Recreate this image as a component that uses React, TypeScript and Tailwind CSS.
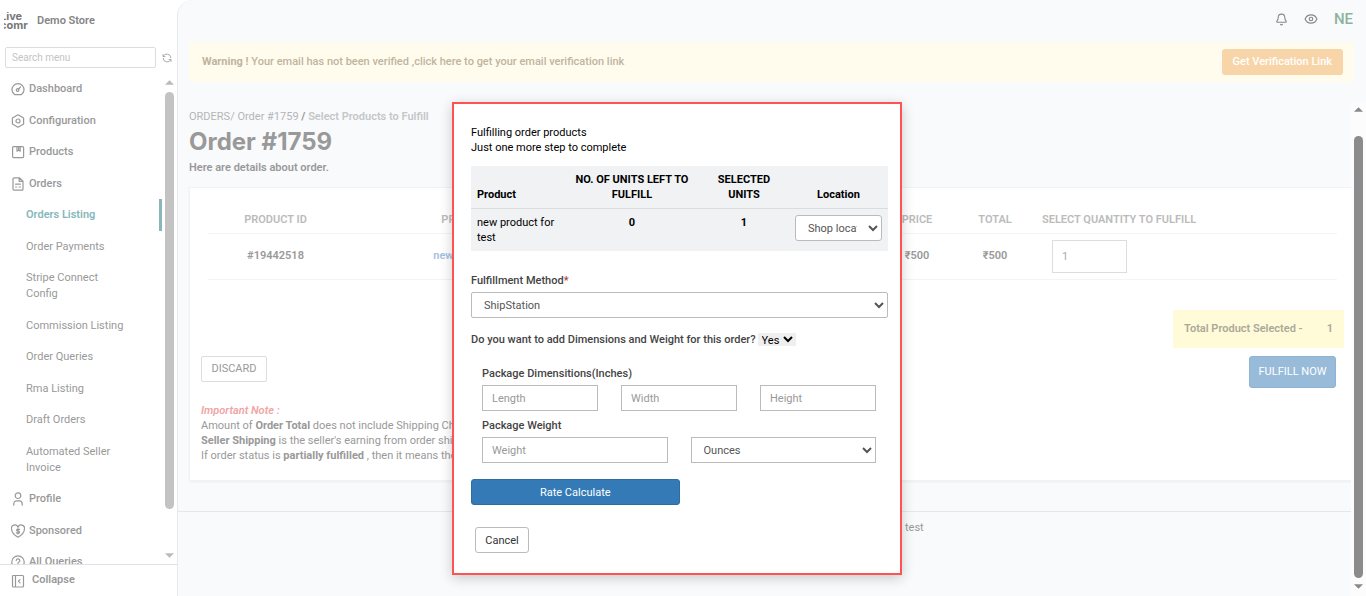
import { ReactNode, useState } from 'react'
import { Bell, Eye } from 'lucide-react'

interface IconProps {
  children: ReactNode
}

function Icon({ children }: IconProps) {
  return (
    <svg
      viewBox="0 0 14 14"
      className="size-[14px] shrink-0"
      fill="none"
      stroke="currentColor"
      strokeWidth="1.2"
      strokeLinecap="round"
      strokeLinejoin="round"
      aria-hidden="true"
    >
      {children}
    </svg>
  )
}

const icons = {
  dashboard: (
    <Icon>
      <path d="M3.6 12.6a6 6 0 1 1 6.8 0z" />
      <circle cx="6.6" cy="8" r="1.3" />
      <path d="M7.6 7l1.900-2" />
    </Icon>
  ),
  configuration: (
    <Icon>
      <path d="M7 .8l5.6 3.1v6.2L7 13.2l-5.6-3.100V3.900z" />
      <circle cx="7" cy="7" r="2" />
    </Icon>
  ),
  products: (
    <Icon>
      <rect x="1.600" y="1.600" width="11" height="11" rx="1" />
      <path d="M6 1.800v4.400l1.600-1.200 1.600 1.200V1.800M7.600 2v2.500" />
    </Icon>
  ),
  orders: (
    <Icon>
      <path d="M2 1.800a1 1 0 0 1 1-1h5.400L12 4.200v8a1 1 0 0 1-1 1H3a1 1 0 0 1-1-1zM8.200 1v3.400h3.600M4.600 7.200h2M6.400 7.200h3M4.600 10h1M8 10h1.400" />
    </Icon>
  ),
  profile: (
    <Icon>
      <circle cx="7" cy="3.700" r="2.800" />
      <path d="M2.800 13.200v-1.400a3 3 0 0 1 3-3h2.400a3 3 0 0 1 3 3v1.400" />
    </Icon>
  ),
  sponsored: (
    <Icon>
      <path d="M7 13.200C3 10.800.6 8.300.6 5.200A3.300 3.300 0 0 1 7 3.400a3.300 3.300 0 0 1 6.400 1.800c0 3.100-2.400 5.600-6.400 8z" />
      <path d="M8.600 5.700c-.4-.6-3-.9-3 .5 0 1.300 3 .7 3 2.100 0 1.300-2.700 1.200-3.200.4M7 4.600v5.400" />
    </Icon>
  ),
  queries: (
    <Icon>
      <circle cx="7" cy="7" r="6.200" />
      <path d="M5.200 5.600a1.800 1.800 0 1 1 2.500 1.700c-.5.200-.7.500-.7 1.100M7 10.300v.1" />
    </Icon>
  ),
}

interface MenuItem {
  label: ReactNode
  icon?: ReactNode
  active?: boolean
}

const menu: MenuItem[] = [
  { label: 'Dashboard', icon: icons.dashboard },
  { label: 'Configuration', icon: icons.configuration },
  { label: 'Products', icon: icons.products },
  { label: 'Orders', icon: icons.orders },
  { label: 'Orders Listing', active: true },
  { label: 'Order Payments' },
  { label: 'Stripe Connect Config' },
  { label: 'Commission Listing' },
  { label: 'Order Queries' },
  { label: 'Rma Listing' },
  { label: 'Draft Orders' },
  { label: 'Automated Seller Invoice' },
  { label: 'Profile', icon: icons.profile },
  { label: 'Sponsored', icon: icons.sponsored },
  { label: 'All Queries', icon: icons.queries },
]

function MenuLink({ item }: { item: MenuItem }) {
  if (item.icon) {
    return (
      <li>
        <a href="#" className="flex items-center gap-1 pl-[11px] text-[11px] leading-4 font-medium text-[#999]">
          {item.icon}
          <span>{item.label}</span>
        </a>
      </li>
    )
  }
  return (
    <li className="relative">
      <a
        href="#"
        className={
          item.active
            ? 'block pl-[26px] text-[11px] leading-4 font-semibold text-[#86b7bc]'
            : 'block w-[130px] pl-[26px] text-[11px] leading-4 text-[#999]'
        }
      >
        {item.label}
      </a>
      {item.active && <span className="absolute -top-2 right-0 h-8 w-[3px] bg-[#8ab5bb]" />}
    </li>
  )
}

function Arrow({ down }: { down?: boolean }) {
  return (
    <svg viewBox="0 0 10 5" className="h-[5px] w-[9px] shrink-0" fill="currentColor" aria-hidden="true">
      <path d={down ? 'M0 0h10L5 5z' : 'M0 5h10L5 0z'} />
    </svg>
  )
}

function Sidebar() {
  return (
    <aside className="flex h-full w-[177px] shrink-0 flex-col bg-white">
      <div className="flex h-[42px] items-center gap-[7px] pl-1">
        <div className="flex w-[26px] flex-col items-start overflow-hidden font-[Inter,sans-serif] text-[11px] leading-[9px] font-bold text-[#777]">
          <span className="-ml-1">Live</span>
          <span className="-ml-1">comr</span>
        </div>
        <span className="text-[11px] font-semibold text-[#858585]">Demo Store</span>
      </div>
      <div className="flex items-center gap-[6px] pt-[5px] pl-[5px]">
        <input
          type="text"
          aria-label="Search menu"
          placeholder="Search menu"
          className="h-[21px] w-[151px] rounded-xs border border-[#ddd] px-[6px] text-[10px] placeholder:text-[#c4c4c4]"
        />
        <button type="button" aria-label="Refresh menu" className="text-[#aaa]">
          <svg viewBox="0 0 10 10" className="size-[10px]" fill="none" stroke="currentColor" strokeWidth="1">
            <path d="M1 1.200V3.500h2.300M1.200 3.300A4 4 0 0 1 8.800 5M9 8.800V6.500H6.700M8.800 6.700A4 4 0 0 1 1.200 5" />
          </svg>
        </button>
      </div>
      <div className="flex min-h-0 flex-1 pt-3">
        <nav className="min-w-0 flex-1 overflow-hidden pt-px" aria-label="Main menu">
          <ul className="flex h-[489px] flex-col justify-between">
            {menu.map((item, i) => (
              <MenuLink key={i} item={item} />
            ))}
          </ul>
        </nav>
        <div className="flex w-[15px] flex-col items-center gap-[7px] pb-[6px] text-[#bbb]">
          <Arrow />
          <div className="w-[9px] flex-1 rounded-full bg-[#c3c3c3]" />
          <div className="h-[30px]" />
          <Arrow down />
        </div>
      </div>
      <button type="button" className="flex h-8 shrink-0 items-center gap-[7px] border-t border-[#dee2e6] pl-[11px] text-[11px] font-semibold text-[#999]">
        <Icon>
          <path d="M1.500 2.500a1 1 0 0 1 1-1h9a1 1 0 0 1 1 1v9.500a1 1 0 0 1-1 1h-9a1 1 0 0 1-1-1zM4.500 1.500v11.500M9 5.600L7.400 7.200 9 8.800" />
        </Icon>
        Collapse
      </button>
    </aside>
  )
}

function OrderPage() {
  return (
    <main className="min-w-0 flex-1 overflow-hidden rounded-tl-2xl border-l border-[#e6e9ed] bg-[#f9fafc]">
      <header className="flex h-[42px] items-center justify-end gap-4 pr-[13px] pb-1 text-[#888]">
        <button type="button" aria-label="Notifications">
          <Bell size={13} strokeWidth={2} />
        </button>
        <button type="button" aria-label="Preview store">
          <Eye size={14} strokeWidth={2} />
        </button>
        <button type="button" className="text-[15px] font-medium text-[#8cb39c]">
          NE
        </button>
      </header>

      <div className="mr-3 ml-[11px] flex h-10 items-center justify-between bg-[#fffcee] pr-[11px] pl-[13px] text-[11px] text-[#c1b49d]">
        <p className="font-medium">
          <b className="font-bold">Warning !</b> Your email has not been verified ,click here to get your email verification link
        </p>
        <button type="button" className="h-[26px] rounded-[3px] bg-[#f7d5a9] px-[11px] font-medium text-white">
          Get Verification Link
        </button>
      </div>

      <div className="mr-[14px] ml-[11px] pt-[26px] text-[#999]">
        <p className="text-[11px] leading-[18px] text-[#b5b5b5]">
          <a href="#">ORDERS/</a> <a href="#">Order #1759</a> <span className="font-bold text-[#999]">/</span>{' '}
          <span className="font-semibold text-[#c5c6c8]">Select Products to Fulfill</span>
        </p>
        <h1 className="font-[Inter,sans-serif] text-[24px] leading-8 font-bold text-[#999]">Order #1759</h1>
        <p className="pt-px text-[11px] leading-[18px] font-semibold text-[#999]">Here are details about order.</p>

        <section className="mt-[10px] h-[294px] border border-[#f0f2f4] bg-white text-[11px] leading-[18px] shadow-xs">
          <div className="pt-[23px] pr-[14px] pl-[18px]">
            <table className="w-full table-fixed text-center font-semibold">
              <colgroup>
                <col className="w-[135px]" />
                <col className="w-[280px]" />
                <col />
                <col className="w-[78px]" />
                <col className="w-[78px]" />
                <col className="w-[303px]" />
              </colgroup>
              <thead className="text-[#bbb]">
                <tr className="h-[22px] border-b border-[#f4f4f4] align-top">
                  <th className="font-semibold">PRODUCT ID</th>
                  <th className="font-semibold">PRODUCT NAME</th>
                  <th />
                  <th className="font-semibold">PRICE</th>
                  <th className="font-semibold">TOTAL</th>
                  <th className="pl-2 text-left font-semibold">SELECT QUANTITY TO FULFILL</th>
                </tr>
              </thead>
              <tbody>
                <tr className="h-[46px] border-b border-[#f4f4f4]">
                  <td>#19442518</td>
                  <td>
                    <a href="#" className="text-[#a3c3df]">
                      new product for test
                    </a>
                  </td>
                  <td />
                  <td>₹500</td>
                  <td>₹500</td>
                  <td className="pl-[18px] text-left">
                    <input
                      type="text"
                      aria-label="Quantity to fulfill"
                      defaultValue="1"
                      className="block h-[33px] w-[75px] border border-[#ddd] px-[9px] font-normal text-[#aaa]"
                    />
                  </td>
                </tr>
              </tbody>
            </table>
          </div>
          <div className="flex justify-end pt-[30px] pr-[7px]">
            <p className="flex h-[38px] w-[171px] items-center justify-between bg-[#fffad8] px-[11px] font-semibold text-[#aba998]">
              <span>Total Product Selected -</span>
              <span>1</span>
            </p>
          </div>
          <div className="flex items-start justify-between pt-2 pr-[15px] pl-[11px]">
            <button type="button" className="h-[26px] w-[66px] rounded-xs border border-[#ddd] text-[#999]">
              DISCARD
            </button>
            <button type="button" className="h-8 w-[87px] rounded-[3px] border border-[#8fb3d2] bg-[#99bbda] text-white">
              FULFILL NOW
            </button>
          </div>
          <div className="pt-[15px] pl-[11px] leading-[15px]">
            <p className="font-semibold text-[#f0a5a5] italic">Important Note :</p>
            <p>
              Amount of <b>Order Total</b> does not include Shipping Charges
            </p>
            <p>
              <b>Seller Shipping</b> is the seller's earning from order shipping
            </p>
            <p>
              If order status is <b>partially fulfilled</b> , then it means there
            </p>
          </div>
        </section>
      </div>

      <footer className="mt-[30px] mr-[15px] border-t border-[#e4e7ec] pt-[7px] pl-[727px] text-[11px] leading-[18px] text-[#999]">
        test
      </footer>
    </main>
  )
}

const fieldClass = 'h-[26px] min-w-0 border border-[#bbb] bg-white px-[9px] text-[11px] text-[#555] placeholder:text-[#999]'
const selectClass = 'border border-[#bbb] bg-white pl-2 pr-2 text-[11px] text-[#555]'

function FulfillDialog() {
  const [addDimensions, setAddDimensions] = useState('Yes')

  return (
    <div
      role="dialog"
      aria-label="Fulfilling order products"
      className="w-[450px] border-2 border-[#ff5252] bg-white pt-[21px] pr-3 pb-5 pl-[17px] text-[11px] leading-[15px] text-black shadow-[0_3px_12px_rgba(0,0,0,0.2)]"
    >
      <p>Fulfilling order products</p>
      <p>Just one more step to complete</p>

      <table className="mt-[11px] w-full table-fixed bg-[#f0f2f4]">
        <colgroup>
          <col className="w-[98px]" />
          <col className="w-[126px]" />
          <col className="w-[98px]" />
          <col />
        </colgroup>
        <thead>
          <tr className="border-b border-[#dadcde] align-bottom">
            <th className="py-[6px] pl-[6px] text-left font-bold">Product</th>
            <th className="py-[6px] font-bold">NO. OF UNITS LEFT TO FULFILL</th>
            <th className="px-4 py-[6px] font-bold">SELECTED UNITS</th>
            <th className="py-[6px] pr-1 font-bold">Location</th>
          </tr>
        </thead>
        <tbody>
          <tr className="align-top">
            <td className="py-[6px] pl-[6px]">new product for test</td>
            <td className="py-[6px] text-center font-bold">0</td>
            <td className="py-[6px] text-center font-bold">1</td>
            <td className="py-[6px] pl-[2px]">
              <select aria-label="Location" className={`${selectClass} h-[26px] w-[87px] rounded-[3px]`}>
                <option>Shop location</option>
              </select>
            </td>
          </tr>
        </tbody>
      </table>

      <label htmlFor="method" className="mt-[22px] block font-medium text-[#444]">
        Fulfillment Method<span className="text-[#a94442]">*</span>
      </label>
      <select id="method" className={`${selectClass} mt-1 block h-[26px] w-full rounded-xs`}>
        <option>ShipStation</option>
      </select>

      <div className="mt-[14px] flex items-center gap-[2px]">
        <label htmlFor="add-dimensions" className="font-medium text-[#444]">
          Do you want to add Dimensions and Weight for this order?
        </label>
        <select
          id="add-dimensions"
          value={addDimensions}
          onChange={(e) => setAddDimensions(e.target.value)}
          className="h-[13px] bg-[#efefef] text-[11px] leading-[13px]"
        >
          <option>Yes</option>
          <option>No</option>
        </select>
      </div>

      <div className="pt-[19px] pr-3 pl-[11px]">
        <p className="font-medium text-[#444]">Package Dimensitions(Inches)</p>
        <div className="mt-1 grid grid-cols-3 gap-[23px]">
          <input type="text" aria-label="Length" placeholder="Length" className={fieldClass} />
          <input type="text" aria-label="Width" placeholder="Width" className={fieldClass} />
          <input type="text" aria-label="Height" placeholder="Height" className={fieldClass} />
        </div>
        <label htmlFor="weight" className="mt-[7px] block font-medium text-[#444]">
          Package Weight
        </label>
        <div className="mt-1 grid grid-cols-2 gap-[23px]">
          <input id="weight" type="text" placeholder="Weight" className={fieldClass} />
          <select aria-label="Weight unit" className={`${selectClass} h-[26px]`}>
            <option>Ounces</option>
          </select>
        </div>
      </div>

      <button type="button" className="mt-4 block h-[26px] w-1/2 rounded-[3px] border border-[#2e6da4] bg-[#337ab7] text-white">
        Rate Calculate
      </button>
      <button type="button" className="mt-[22px] ml-1 block h-[26px] w-[54px] rounded-[3px] border border-[#bbb] bg-white text-[#333]">
        Cancel
      </button>
    </div>
  )
}

export default function App() {
  return (
    <div className="relative flex h-screen overflow-hidden bg-white font-[Roboto,sans-serif]">
      <Sidebar />
      <OrderPage />
      <div className="absolute inset-0 flex pt-[102px]">
        <div className="flex flex-1 items-start justify-center pl-[3px]">
          <FulfillDialog />
        </div>
        <div className="flex w-[15px] flex-col items-center gap-[6px] bg-[#fcfcfc] pt-[5px] pb-[7px] text-[#888]">
          <Arrow />
          <div className="h-3" />
          <div className="w-[9px] flex-1 rounded-full bg-[#8b8b8b]" />
          <Arrow down />
        </div>
      </div>
    </div>
  )
}
